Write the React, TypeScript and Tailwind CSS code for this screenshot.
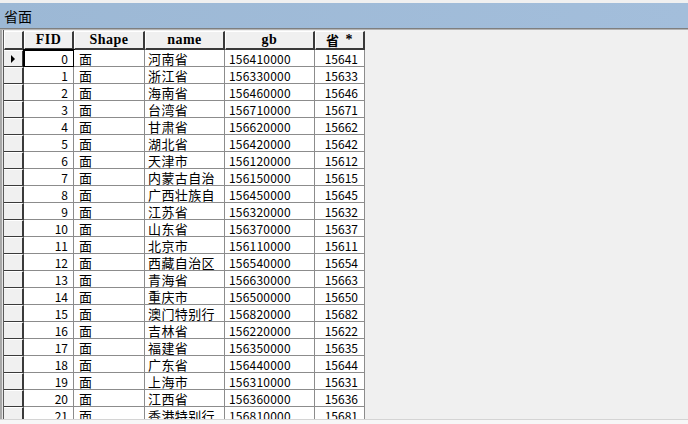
const CJK = "'Noto Sans CJK SC', 'Liberation Sans', sans-serif";
const SERIF = "'Liberation Serif', 'Noto Sans CJK SC', serif";

const rows: [string, string, string][] = [
  ['河南省', '156410000', '15641'],
  ['浙江省', '156330000', '15633'],
  ['海南省', '156460000', '15646'],
  ['台湾省', '156710000', '15671'],
  ['甘肃省', '156620000', '15662'],
  ['湖北省', '156420000', '15642'],
  ['天津市', '156120000', '15612'],
  ['内蒙古自治', '156150000', '15615'],
  ['广西壮族自', '156450000', '15645'],
  ['江苏省', '156320000', '15632'],
  ['山东省', '156370000', '15637'],
  ['北京市', '156110000', '15611'],
  ['西藏自治区', '156540000', '15654'],
  ['青海省', '156630000', '15663'],
  ['重庆市', '156500000', '15650'],
  ['澳门特别行', '156820000', '15682'],
  ['吉林省', '156220000', '15622'],
  ['福建省', '156350000', '15635'],
  ['广东省', '156440000', '15644'],
  ['上海市', '156310000', '15631'],
  ['江西省', '156360000', '15636'],
  ['香港特别行', '156810000', '15681'],
];

function HeaderCell({ w, children }: { w: string; children?: React.ReactNode }) {
  return (
    <div
      className={`${w} h-[19px] shrink-0 flex items-center justify-center bg-[#f0f0f0] border-t border-l border-t-white border-l-white border-r-2 border-b-2 border-r-[#3a3a3a] border-b-[#3a3a3a] text-[14px] tracking-[0.5px] font-bold text-black leading-[14px]`}
      style={{ fontFamily: SERIF }}
    >
      {children}
    </div>
  );
}

export default function App() {
  return (
    <div className="w-[688px] h-[424px] overflow-hidden bg-[#f0f0f0] flex flex-col">
      {/* title bar */}
      <div className="h-[3px] shrink-0 bg-[#f0f0f0]" />
      <div
        className="h-[25px] shrink-0 bg-gradient-to-r from-[#9cb8d5] to-[#a3bedb] flex items-center pl-[4px] text-[14px] leading-[18px] text-black"
        style={{ fontFamily: CJK }}
      >
        省面
      </div>
      <div className="h-px shrink-0 bg-[#7f7f7f]" />
      <div className="h-px shrink-0 bg-[#b4b4b4]" />

      {/* grid */}
      <div className="flex-1 min-h-0 flex overflow-hidden">
        <div className="w-[4px] shrink-0 border-l-2 border-l-[#a8a8a8] border-r border-r-[#5a5a5a] bg-[#e6e6e6]" />
        <div className="flex flex-col pt-px self-start">
          <div className="flex shrink-0">
            <HeaderCell w="w-[20px]" />
            <HeaderCell w="w-[50px]">FID</HeaderCell>
            <HeaderCell w="w-[71px]">Shape</HeaderCell>
            <HeaderCell w="w-[80px]">name</HeaderCell>
            <HeaderCell w="w-[90px]">gb</HeaderCell>
            <HeaderCell w="w-[50px]">
              <span style={{ fontFamily: CJK }} className="text-[13px] font-bold">省</span>
              <span className="ml-[6px]">*</span>
            </HeaderCell>
          </div>
          {rows.map(([name, gb, code], i) => (
            <div key={i} className="flex shrink-0 h-[17px] text-black leading-[15px]">
              <div className="w-[20px] shrink-0 flex items-center justify-center bg-[#f0f0f0] border-t border-t-white border-r-2 border-b border-r-[#3a3a3a] border-b-[#3a3a3a]">
                {i === 0 && (
                  <div className="w-0 h-0 border-y-[4px] border-y-transparent border-l-[4px] border-l-black" />
                )}
              </div>
              <div
                className={`w-[50px] shrink-0 bg-white flex items-center justify-end pr-[5px] text-[12px] border-r border-b border-[#8c8c8c] ${
                  i === 0 ? 'outline-2 outline-black -outline-offset-1' : ''
                }`}
                style={{ fontFamily: CJK }}
              >
                {i}
              </div>
              <div
                className="w-[71px] shrink-0 bg-white flex items-center pl-[5px] text-[13px] border-r border-b border-[#8c8c8c]"
                style={{ fontFamily: CJK }}
              >
                面
              </div>
              <div
                className="w-[80px] shrink-0 bg-white flex items-center pl-[3px] text-[13px] tracking-[0.4px] whitespace-nowrap overflow-hidden border-r border-b border-[#8c8c8c]"
                style={{ fontFamily: CJK }}
              >
                {name}
              </div>
              <div
                className="w-[90px] shrink-0 bg-white flex items-center pl-[4px] text-[12px] tracking-[0.2px] border-r border-b border-[#8c8c8c]"
                style={{ fontFamily: CJK }}
              >
                {gb}
              </div>
              <div
                className="w-[50px] shrink-0 bg-white flex items-center justify-end pr-[6px] text-[12px] border-r border-b border-[#8c8c8c]"
                style={{ fontFamily: CJK }}
              >
                {code}
              </div>
            </div>
          ))}
        </div>
      </div>

      {/* scroll area edge */}
      <div className="h-[5px] shrink-0 border-t border-t-[#d4d4d4] bg-[#f7f7f7]" />
    </div>
  );
}
